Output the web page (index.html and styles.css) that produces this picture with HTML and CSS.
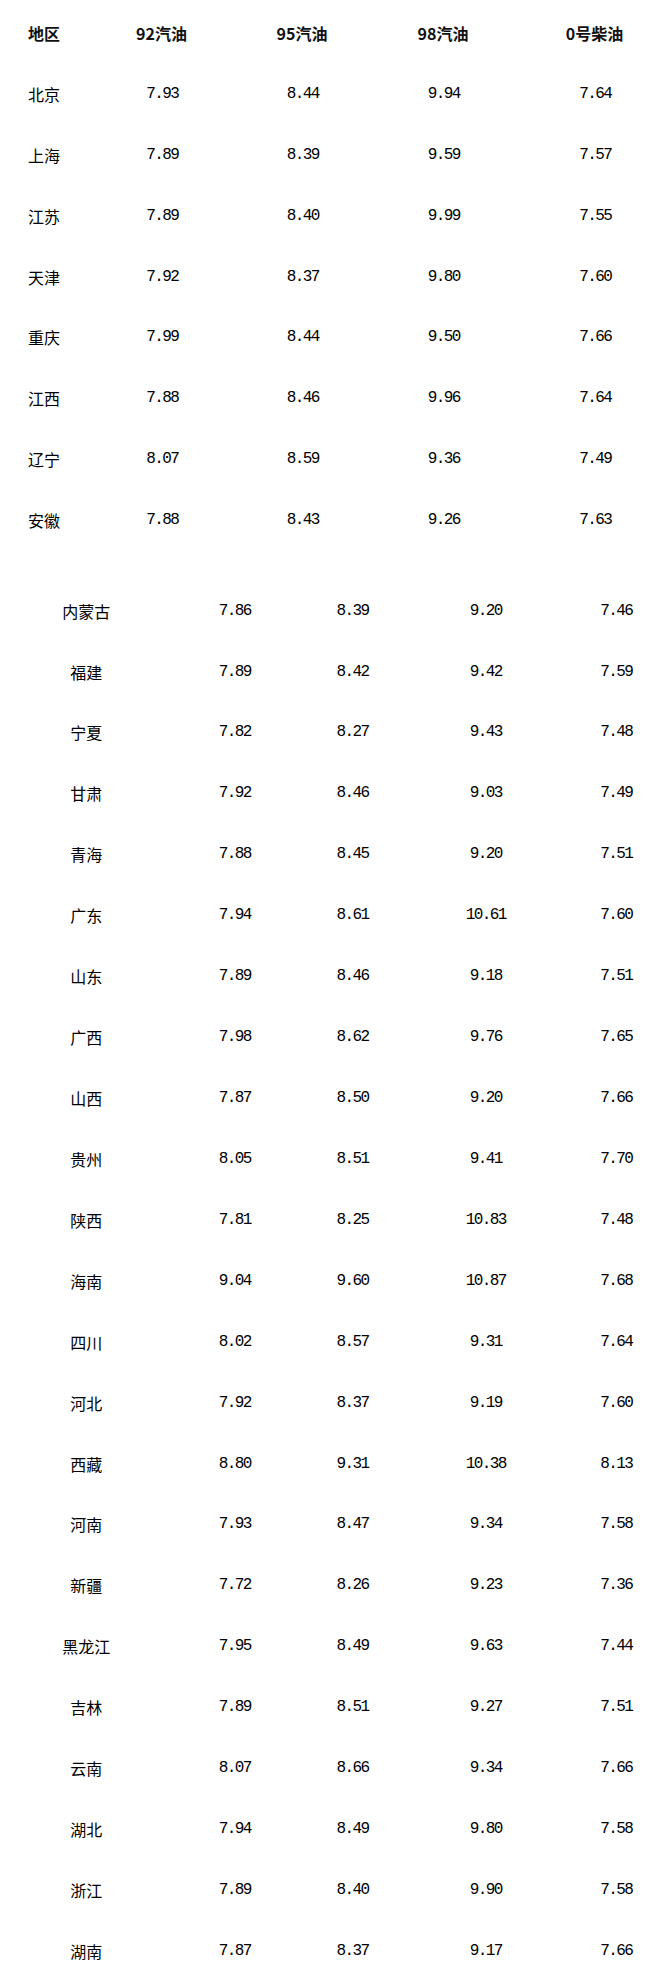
FILE: index.html
```html
<!DOCTYPE html>
<html lang="zh-CN">
<head>
<meta charset="utf-8">
<title>油价</title>
<link rel="stylesheet" href="styles.css">
</head>
<body>
<table class="price-table first">
  <colgroup>
    <col class="c1"><col class="c2"><col class="c3"><col class="c4"><col class="c5">
  </colgroup>
  <thead>
    <tr><th class="region">地区</th><th>92汽油</th><th>95汽油</th><th>98汽油</th><th>0号柴油</th></tr>
  </thead>
  <tbody>
    <tr><td class="region">北京</td><td class="num">7.93</td><td class="num">8.44</td><td class="num">9.94</td><td class="num">7.64</td></tr>
    <tr><td class="region">上海</td><td class="num">7.89</td><td class="num">8.39</td><td class="num">9.59</td><td class="num">7.57</td></tr>
    <tr><td class="region">江苏</td><td class="num">7.89</td><td class="num">8.40</td><td class="num">9.99</td><td class="num">7.55</td></tr>
    <tr><td class="region">天津</td><td class="num">7.92</td><td class="num">8.37</td><td class="num">9.80</td><td class="num">7.60</td></tr>
    <tr><td class="region">重庆</td><td class="num">7.99</td><td class="num">8.44</td><td class="num">9.50</td><td class="num">7.66</td></tr>
    <tr><td class="region">江西</td><td class="num">7.88</td><td class="num">8.46</td><td class="num">9.96</td><td class="num">7.64</td></tr>
    <tr><td class="region">辽宁</td><td class="num">8.07</td><td class="num">8.59</td><td class="num">9.36</td><td class="num">7.49</td></tr>
    <tr><td class="region">安徽</td><td class="num">7.88</td><td class="num">8.43</td><td class="num">9.26</td><td class="num">7.63</td></tr>
  </tbody>
</table>

<table class="price-table second">
  <colgroup>
    <col class="d1"><col class="d2"><col class="d3"><col class="d4"><col class="d5">
  </colgroup>
  <tbody>
    <tr><td>内蒙古</td><td class="num">7.86</td><td class="num">8.39</td><td class="num">9.20</td><td class="num">7.46</td></tr>
    <tr><td>福建</td><td class="num">7.89</td><td class="num">8.42</td><td class="num">9.42</td><td class="num">7.59</td></tr>
    <tr><td>宁夏</td><td class="num">7.82</td><td class="num">8.27</td><td class="num">9.43</td><td class="num">7.48</td></tr>
    <tr><td>甘肃</td><td class="num">7.92</td><td class="num">8.46</td><td class="num">9.03</td><td class="num">7.49</td></tr>
    <tr><td>青海</td><td class="num">7.88</td><td class="num">8.45</td><td class="num">9.20</td><td class="num">7.51</td></tr>
    <tr><td>广东</td><td class="num">7.94</td><td class="num">8.61</td><td class="num">10.61</td><td class="num">7.60</td></tr>
    <tr><td>山东</td><td class="num">7.89</td><td class="num">8.46</td><td class="num">9.18</td><td class="num">7.51</td></tr>
    <tr><td>广西</td><td class="num">7.98</td><td class="num">8.62</td><td class="num">9.76</td><td class="num">7.65</td></tr>
    <tr><td>山西</td><td class="num">7.87</td><td class="num">8.50</td><td class="num">9.20</td><td class="num">7.66</td></tr>
    <tr><td>贵州</td><td class="num">8.05</td><td class="num">8.51</td><td class="num">9.41</td><td class="num">7.70</td></tr>
    <tr><td>陕西</td><td class="num">7.81</td><td class="num">8.25</td><td class="num">10.83</td><td class="num">7.48</td></tr>
    <tr><td>海南</td><td class="num">9.04</td><td class="num">9.60</td><td class="num">10.87</td><td class="num">7.68</td></tr>
    <tr><td>四川</td><td class="num">8.02</td><td class="num">8.57</td><td class="num">9.31</td><td class="num">7.64</td></tr>
    <tr><td>河北</td><td class="num">7.92</td><td class="num">8.37</td><td class="num">9.19</td><td class="num">7.60</td></tr>
    <tr><td>西藏</td><td class="num">8.80</td><td class="num">9.31</td><td class="num">10.38</td><td class="num">8.13</td></tr>
    <tr><td>河南</td><td class="num">7.93</td><td class="num">8.47</td><td class="num">9.34</td><td class="num">7.58</td></tr>
    <tr><td>新疆</td><td class="num">7.72</td><td class="num">8.26</td><td class="num">9.23</td><td class="num">7.36</td></tr>
    <tr><td>黑龙江</td><td class="num">7.95</td><td class="num">8.49</td><td class="num">9.63</td><td class="num">7.44</td></tr>
    <tr><td>吉林</td><td class="num">7.89</td><td class="num">8.51</td><td class="num">9.27</td><td class="num">7.51</td></tr>
    <tr><td>云南</td><td class="num">8.07</td><td class="num">8.66</td><td class="num">9.34</td><td class="num">7.66</td></tr>
    <tr><td>湖北</td><td class="num">7.94</td><td class="num">8.49</td><td class="num">9.80</td><td class="num">7.58</td></tr>
    <tr><td>浙江</td><td class="num">7.89</td><td class="num">8.40</td><td class="num">9.90</td><td class="num">7.58</td></tr>
    <tr><td>湖南</td><td class="num">7.87</td><td class="num">8.37</td><td class="num">9.17</td><td class="num">7.66</td></tr>
  </tbody>
</table>
</body>
</html>
```

FILE: styles.css
```css
html, body {
  margin: 0;
  padding: 0;
  background: #ffffff;
}

body {
  font-family: "Noto Sans CJK SC", "Liberation Sans", sans-serif;
  font-size: 16px;
  line-height: 20px;
  color: #000000;
}

.price-table {
  border-collapse: collapse;
  border-spacing: 0;
  table-layout: fixed;
}

.price-table th,
.price-table td {
  padding: 0;
  text-align: center;
  vertical-align: middle;
  white-space: nowrap;
}

.price-table th {
  font-weight: bold;
  color: #111111;
}

.price-table .region {
  text-align: left;
}

.num {
  font-family: "Liberation Mono", monospace;
  letter-spacing: -1.6px;
  text-indent: 1.6px;
}

/* first table */
.first {
  margin: 3px 0 0 28px;
  width: 636px;
}
.first th,
.first td {
  height: 60.8px;
}
.c1 { width: 52px; }
.c2 { width: 163px; }
.c3 { width: 118px; }
.c4 { width: 164px; }
.c5 { width: 139px; }

/* second table */
.second {
  margin: 30px 0 0 20px;
  width: 629px;
}
.second td {
  height: 60.93px;
}
.d1 { width: 132.6px; }
.d2 { width: 162.8px; }
.d3 { width: 72.6px; }
.d4 { width: 194px; }
.d5 { width: 67px; }
```
